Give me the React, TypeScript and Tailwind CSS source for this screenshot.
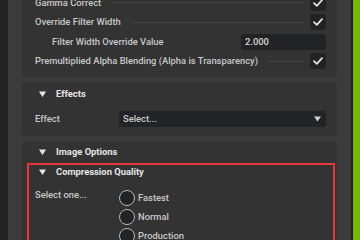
import React from 'react';

const font = { fontFamily: 'Roboto, "Noto Sans", sans-serif' };

function Tri() {
  return (
    <svg width="7" height="6" viewBox="0 0 7 6" className="shrink-0">
      <path d="M0 0.5 H7 L3.5 6 Z" fill="#e6e6e6" />
    </svg>
  );
}

function Check() {
  return (
    <div className="w-[16px] h-[16px] rounded-[3px] bg-[#222222] flex items-center justify-center shrink-0">
      <svg width="10" height="8" viewBox="0 0 10 8">
        <path d="M1 4.2 L3.8 6.8 L9 1.2" fill="none" stroke="#e0e0e0" strokeWidth="1.8" strokeLinecap="round" strokeLinejoin="round" />
      </svg>
    </div>
  );
}

function CheckRow({ label }: { label: string }) {
  return (
    <div className="h-[19.5px] flex items-center">
      <span className="text-[#c8c8c8] whitespace-nowrap">{label}</span>
      <div className="flex-1 h-px bg-[#444444] ml-[10px] mr-[6px]" />
      <Check />
    </div>
  );
}

function Header({ title }: { title: string }) {
  return (
    <div className="flex items-center gap-[10px] pl-[4px] h-[12px] font-bold text-[#e4e4e4]">
      <Tri />
      <span>{title}</span>
    </div>
  );
}

function Radio({ label }: { label: string }) {
  return (
    <div className="h-[19px] flex items-center gap-[3px]">
      <div className="w-[16px] h-[16px] rounded-full border border-[#b8b8b8] bg-[#222325]" />
      <span className="text-[#c8c8c8]">{label}</span>
    </div>
  );
}

export default function App() {
  return (
    <div className="w-[360px] h-[240px] overflow-hidden flex text-[9.4px] leading-[12px] font-medium" style={font}>
      <div className="w-[8px] bg-[#232323]" />
      <div className="flex-1 bg-[#3b3b3b] px-[14px] flex flex-col gap-[5px]">
        {/* top card, scrolled partly out of view */}
        <div className="-mt-[13px] bg-[#333333] rounded-[4px] pt-[6px] pb-[6px] pl-[13px] pr-[11px]">
          <CheckRow label="Gamma Correct" />
          <CheckRow label="Override Filter Width" />
          <div className="h-[19.5px] flex items-center">
            <span className="text-[#c8c8c8] pl-[17px] flex-1">Filter Width Override Value</span>
            <div className="w-[85px] h-[16px] rounded-[3px] bg-[#222325] text-[#d8d8d8] flex items-center pl-[4px]">2.000</div>
          </div>
          <CheckRow label="Premultiplied Alpha Blending (Alpha is Transparency)" />
        </div>

        {/* Effects */}
        <div className="bg-[#333333] rounded-[4px] pt-[6px] pb-[9px] pl-[13px] pr-[11px]">
          <Header title="Effects" />
          <div className="flex items-center mt-[11px]">
            <span className="w-[84px] text-[#c8c8c8]">Effect</span>
            <div className="flex-1 h-[16px] rounded-[3px] bg-[#232427] flex items-center justify-between pl-[4px] pr-[5px] text-[#c8c8c8]">
              <span>Select...</span>
              <svg width="7" height="6" viewBox="0 0 7 6">
                <path d="M0 0.5 H7 L3.5 5.5 Z" fill="#d0d0d0" />
              </svg>
            </div>
          </div>
        </div>

        {/* Image Options */}
        <div className="bg-[#333333] rounded-[4px] pt-[5px] pl-[5px] pr-[2px] flex-1">
          <div className="pl-[8px]">
            <Header title="Image Options" />
          </div>
          <div className="mt-[5px] border-2 border-[#e8363a] pt-[0.5px] pl-[6px] pb-[8px]">
            <Header title="Compression Quality" />
            <div className="flex mt-[10.5px]">
              <span className="w-[84px] text-[#c8c8c8] pt-[1px]">Select one...</span>
              <div className="flex flex-col">
                <Radio label="Fastest" />
                <Radio label="Normal" />
                <Radio label="Production" />
              </div>
            </div>
          </div>
        </div>
      </div>
      <div className="w-[2px] bg-[#1e1e1e]" />
      <div className="w-[7px] bg-[#76b900]" />
    </div>
  );
}
